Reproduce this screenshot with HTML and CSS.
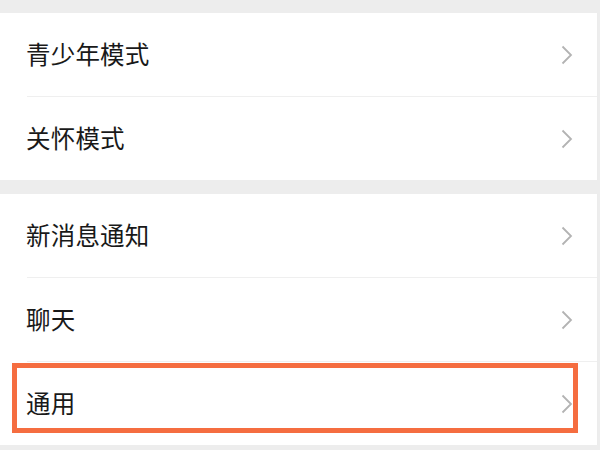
FILE: index.html
```html
<!DOCTYPE html>
<html lang="zh">
<head>
<meta charset="utf-8">
<link rel="stylesheet" href="styles.css">
</head>
<body>
<div class="page">
  <div class="band band-top"></div>
  <div class="group">
    <div class="row"><span class="label">青少年模式</span><svg class="chev" viewBox="0 0 12 20"><polyline points="1.5,1.5 10,10 1.5,18.5"/></svg></div>
    <div class="row"><span class="label">关怀模式</span><svg class="chev" viewBox="0 0 12 20"><polyline points="1.5,1.5 10,10 1.5,18.5"/></svg></div>
  </div>
  <div class="band band-mid"></div>
  <div class="group">
    <div class="row"><span class="label">新消息通知</span><svg class="chev" viewBox="0 0 12 20"><polyline points="1.5,1.5 10,10 1.5,18.5"/></svg></div>
    <div class="row"><span class="label">聊天</span><svg class="chev" viewBox="0 0 12 20"><polyline points="1.5,1.5 10,10 1.5,18.5"/></svg></div>
    <div class="row row-hl"><span class="label">通用</span><svg class="chev" viewBox="0 0 12 20"><polyline points="1.5,1.5 10,10 1.5,18.5"/></svg><div class="highlight"></div></div>
  </div>
  <div class="band band-bottom"></div>
</div>
</body>
</html>
```
FILE: styles.css
```css
html, body {
  margin: 0;
  padding: 0;
  background: #ededed;
}
.page {
  width: 600px;
  height: 450px;
  overflow: hidden;
  display: flex;
  flex-direction: column;
  font-family: "Noto Sans CJK SC", "Noto Sans", sans-serif;
}
.band { background: #ededed; flex: none; }
.band-top { height: 13px; }
.band-mid { height: 14px; }
.band-bottom { flex: 1; }
.group {
  background: #ffffff;
  border-right: 1px solid #ececec;
  margin-right: 2px;
}
.row {
  position: relative;
  height: 83px;
  display: flex;
  align-items: center;
  justify-content: space-between;
  padding: 0 24px 0 26px;
}
.row + .row::before {
  content: "";
  position: absolute;
  top: -1px;
  left: 27px;
  right: 0;
  height: 1px;
  background: #efefef;
}
.row + .row { margin-top: 1px; }
.label {
  font-size: 24.5px;
  color: #191919;
  letter-spacing: 0.2px;
  line-height: 1;
}
.chev {
  width: 12px;
  height: 20px;
  fill: none;
  stroke: #b3b3b3;
  stroke-width: 1.8;
}
.highlight {
  position: absolute;
  left: 12px;
  top: 1px;
  width: 556px;
  height: 60px;
  border: 5px solid #f56d40;
}
```
